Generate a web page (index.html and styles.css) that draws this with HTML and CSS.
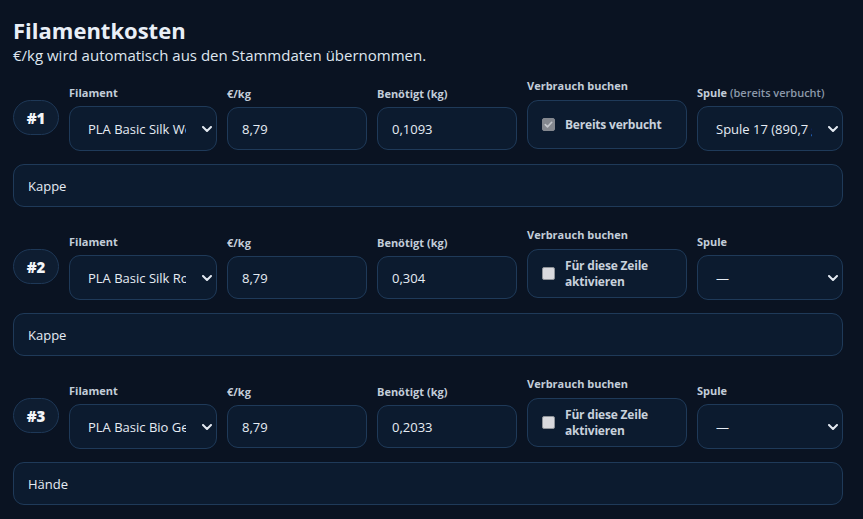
FILE: index.html
```html
<!DOCTYPE html>
<html lang="de">
<head>
<meta charset="utf-8">
<title>Filamentkosten</title>
<link rel="stylesheet" href="styles.css">
</head>
<body>
<section class="panel">
  <h2 class="title">Filamentkosten</h2>
  <p class="subtitle">€/kg wird automatisch aus den Stammdaten übernommen.</p>

  <div class="entry">
    <div class="row">
      <span class="badge">#1</span>
      <label class="field">
        <span class="lbl">Filament</span>
        <span class="select-wrap">
          <select class="select"><option>PLA Basic Silk Weiß</option></select>
          <svg class="chev" viewBox="0 0 10 6" width="10" height="6"><path d="M1 1l4 4 4-4" fill="none" stroke="currentColor" stroke-width="2" stroke-linecap="round" stroke-linejoin="round"/></svg>
        </span>
      </label>
      <label class="field">
        <span class="lbl">€/kg</span>
        <input class="input" value="8,79">
      </label>
      <label class="field">
        <span class="lbl">Benötigt (kg)</span>
        <input class="input" value="0,1093">
      </label>
      <div class="field">
        <span class="lbl">Verbrauch buchen</span>
        <div class="check-box">
          <span class="cb cb-on"><svg viewBox="0 0 12 12" width="11" height="11"><path d="M2.5 6.2l2.4 2.4 4.6-5" fill="none" stroke="#c4c7cc" stroke-width="1.8" stroke-linecap="round" stroke-linejoin="round"/></svg></span>
          <span class="cb-text">Bereits verbucht</span>
        </div>
      </div>
      <label class="field">
        <span class="lbl">Spule <span class="lbl-muted">(bereits verbucht)</span></span>
        <span class="select-wrap">
          <select class="select"><option>Spule 17 (890,7 g)</option></select>
          <svg class="chev" viewBox="0 0 10 6" width="10" height="6"><path d="M1 1l4 4 4-4" fill="none" stroke="currentColor" stroke-width="2" stroke-linecap="round" stroke-linejoin="round"/></svg>
        </span>
      </label>
    </div>
    <input class="input note" value="Kappe">
  </div>

  <div class="entry">
    <div class="row">
      <span class="badge">#2</span>
      <label class="field">
        <span class="lbl">Filament</span>
        <span class="select-wrap">
          <select class="select"><option>PLA Basic Silk Rosa</option></select>
          <svg class="chev" viewBox="0 0 10 6" width="10" height="6"><path d="M1 1l4 4 4-4" fill="none" stroke="currentColor" stroke-width="2" stroke-linecap="round" stroke-linejoin="round"/></svg>
        </span>
      </label>
      <label class="field">
        <span class="lbl">€/kg</span>
        <input class="input" value="8,79">
      </label>
      <label class="field">
        <span class="lbl">Benötigt (kg)</span>
        <input class="input" value="0,304">
      </label>
      <div class="field">
        <span class="lbl">Verbrauch buchen</span>
        <div class="check-box">
          <span class="cb"></span>
          <span class="cb-text">Für diese Zeile aktivieren</span>
        </div>
      </div>
      <label class="field">
        <span class="lbl">Spule</span>
        <span class="select-wrap">
          <select class="select"><option>—</option></select>
          <svg class="chev" viewBox="0 0 10 6" width="10" height="6"><path d="M1 1l4 4 4-4" fill="none" stroke="currentColor" stroke-width="2" stroke-linecap="round" stroke-linejoin="round"/></svg>
        </span>
      </label>
    </div>
    <input class="input note" value="Kappe">
  </div>

  <div class="entry">
    <div class="row">
      <span class="badge">#3</span>
      <label class="field">
        <span class="lbl">Filament</span>
        <span class="select-wrap">
          <select class="select"><option>PLA Basic Bio Gelb</option></select>
          <svg class="chev" viewBox="0 0 10 6" width="10" height="6"><path d="M1 1l4 4 4-4" fill="none" stroke="currentColor" stroke-width="2" stroke-linecap="round" stroke-linejoin="round"/></svg>
        </span>
      </label>
      <label class="field">
        <span class="lbl">€/kg</span>
        <input class="input" value="8,79">
      </label>
      <label class="field">
        <span class="lbl">Benötigt (kg)</span>
        <input class="input" value="0,2033">
      </label>
      <div class="field">
        <span class="lbl">Verbrauch buchen</span>
        <div class="check-box">
          <span class="cb"></span>
          <span class="cb-text">Für diese Zeile aktivieren</span>
        </div>
      </div>
      <label class="field">
        <span class="lbl">Spule</span>
        <span class="select-wrap">
          <select class="select"><option>—</option></select>
          <svg class="chev" viewBox="0 0 10 6" width="10" height="6"><path d="M1 1l4 4 4-4" fill="none" stroke="currentColor" stroke-width="2" stroke-linecap="round" stroke-linejoin="round"/></svg>
        </span>
      </label>
    </div>
    <input class="input note" value="Hände">
  </div>
</section>
</body>
</html>
```

FILE: styles.css
```css
* { box-sizing: border-box; }
html, body {
  margin: 0;
  padding: 0;
  background: #0a1322;
  height: 100%;
  overflow: hidden;
}
body {
  font-family: "Open Sans", "Noto Sans", sans-serif;
  color: #e6ecf4;
}
.panel {
  padding: 16px 20px 0 13px;
}
.title {
  margin: 0;
  font-size: 22px;
  line-height: 28px;
  font-weight: 700;
  color: #e9eff7;
}
.subtitle {
  margin: 1px 0 0;
  font-size: 15px;
  line-height: 20px;
  color: #dfe6ef;
}
.entry {
  margin-top: 14px;
}
.entry + .entry {
  margin-top: 21px;
}
.row {
  display: grid;
  grid-template-columns: 46px 148px 140px 140px 160px 146px;
  column-gap: 10px;
  align-items: end;
}
.badge {
  height: 35px;
  margin-bottom: 16px;
  border: 1px solid #1e3857;
  border-radius: 18px;
  background: #0e1d31;
  display: flex;
  align-items: center;
  justify-content: center;
  font-size: 15px;
  font-weight: 800;
  color: #f2f5f9;
}
.field {
  display: flex;
  flex-direction: column;
  min-width: 0;
}
.lbl {
  font-size: 11px;
  line-height: 14px;
  font-weight: 700;
  color: #c3cdd9;
  margin-bottom: 6px;
  white-space: nowrap;
}
.lbl-muted {
  color: #8c99aa;
  font-weight: 600;
}
.input, .select {
  font-family: inherit;
  font-size: 13px;
  color: #e6ecf4;
  background: #0c1b2f;
  border: 1px solid #1f3a59;
  border-radius: 11px;
  outline: none;
}
.input {
  height: 43px;
  margin-bottom: 1px;
  padding: 0 14px;
  width: 100%;
}
.select-wrap {
  position: relative;
  display: block;
}
.select {
  -webkit-appearance: none;
  appearance: none;
  display: block;
  width: 100%;
  height: 45px;
  padding: 0 30px 0 18px;
}
.chev {
  position: absolute;
  right: 5px;
  top: 20px;
  color: #e3e9f1;
  pointer-events: none;
}
.check-box {
  height: 49px;
  margin-bottom: 2px;
  margin-top: 1px;
  border: 1px solid #1f3a59;
  border-radius: 11px;
  background: #0c1b2f;
  display: flex;
  align-items: center;
  gap: 10px;
  padding: 0 14px;
}
.cb {
  flex: none;
  width: 13px;
  height: 13px;
  border-radius: 2px;
  background: #d9d9dd;
  border: 1px solid #8e9298;
  display: flex;
  align-items: center;
  justify-content: center;
}
.cb-on {
  background: #84888f;
  border-color: #84888f;
}
.cb-text {
  font-size: 12px;
  line-height: 16px;
  font-weight: 700;
  color: #c8d1dc;
  letter-spacing: -0.2px;
}
.note {
  display: block;
  margin-top: 13px;
  margin-bottom: 0;
  height: 43px;
  padding: 0 14px;
}
```
